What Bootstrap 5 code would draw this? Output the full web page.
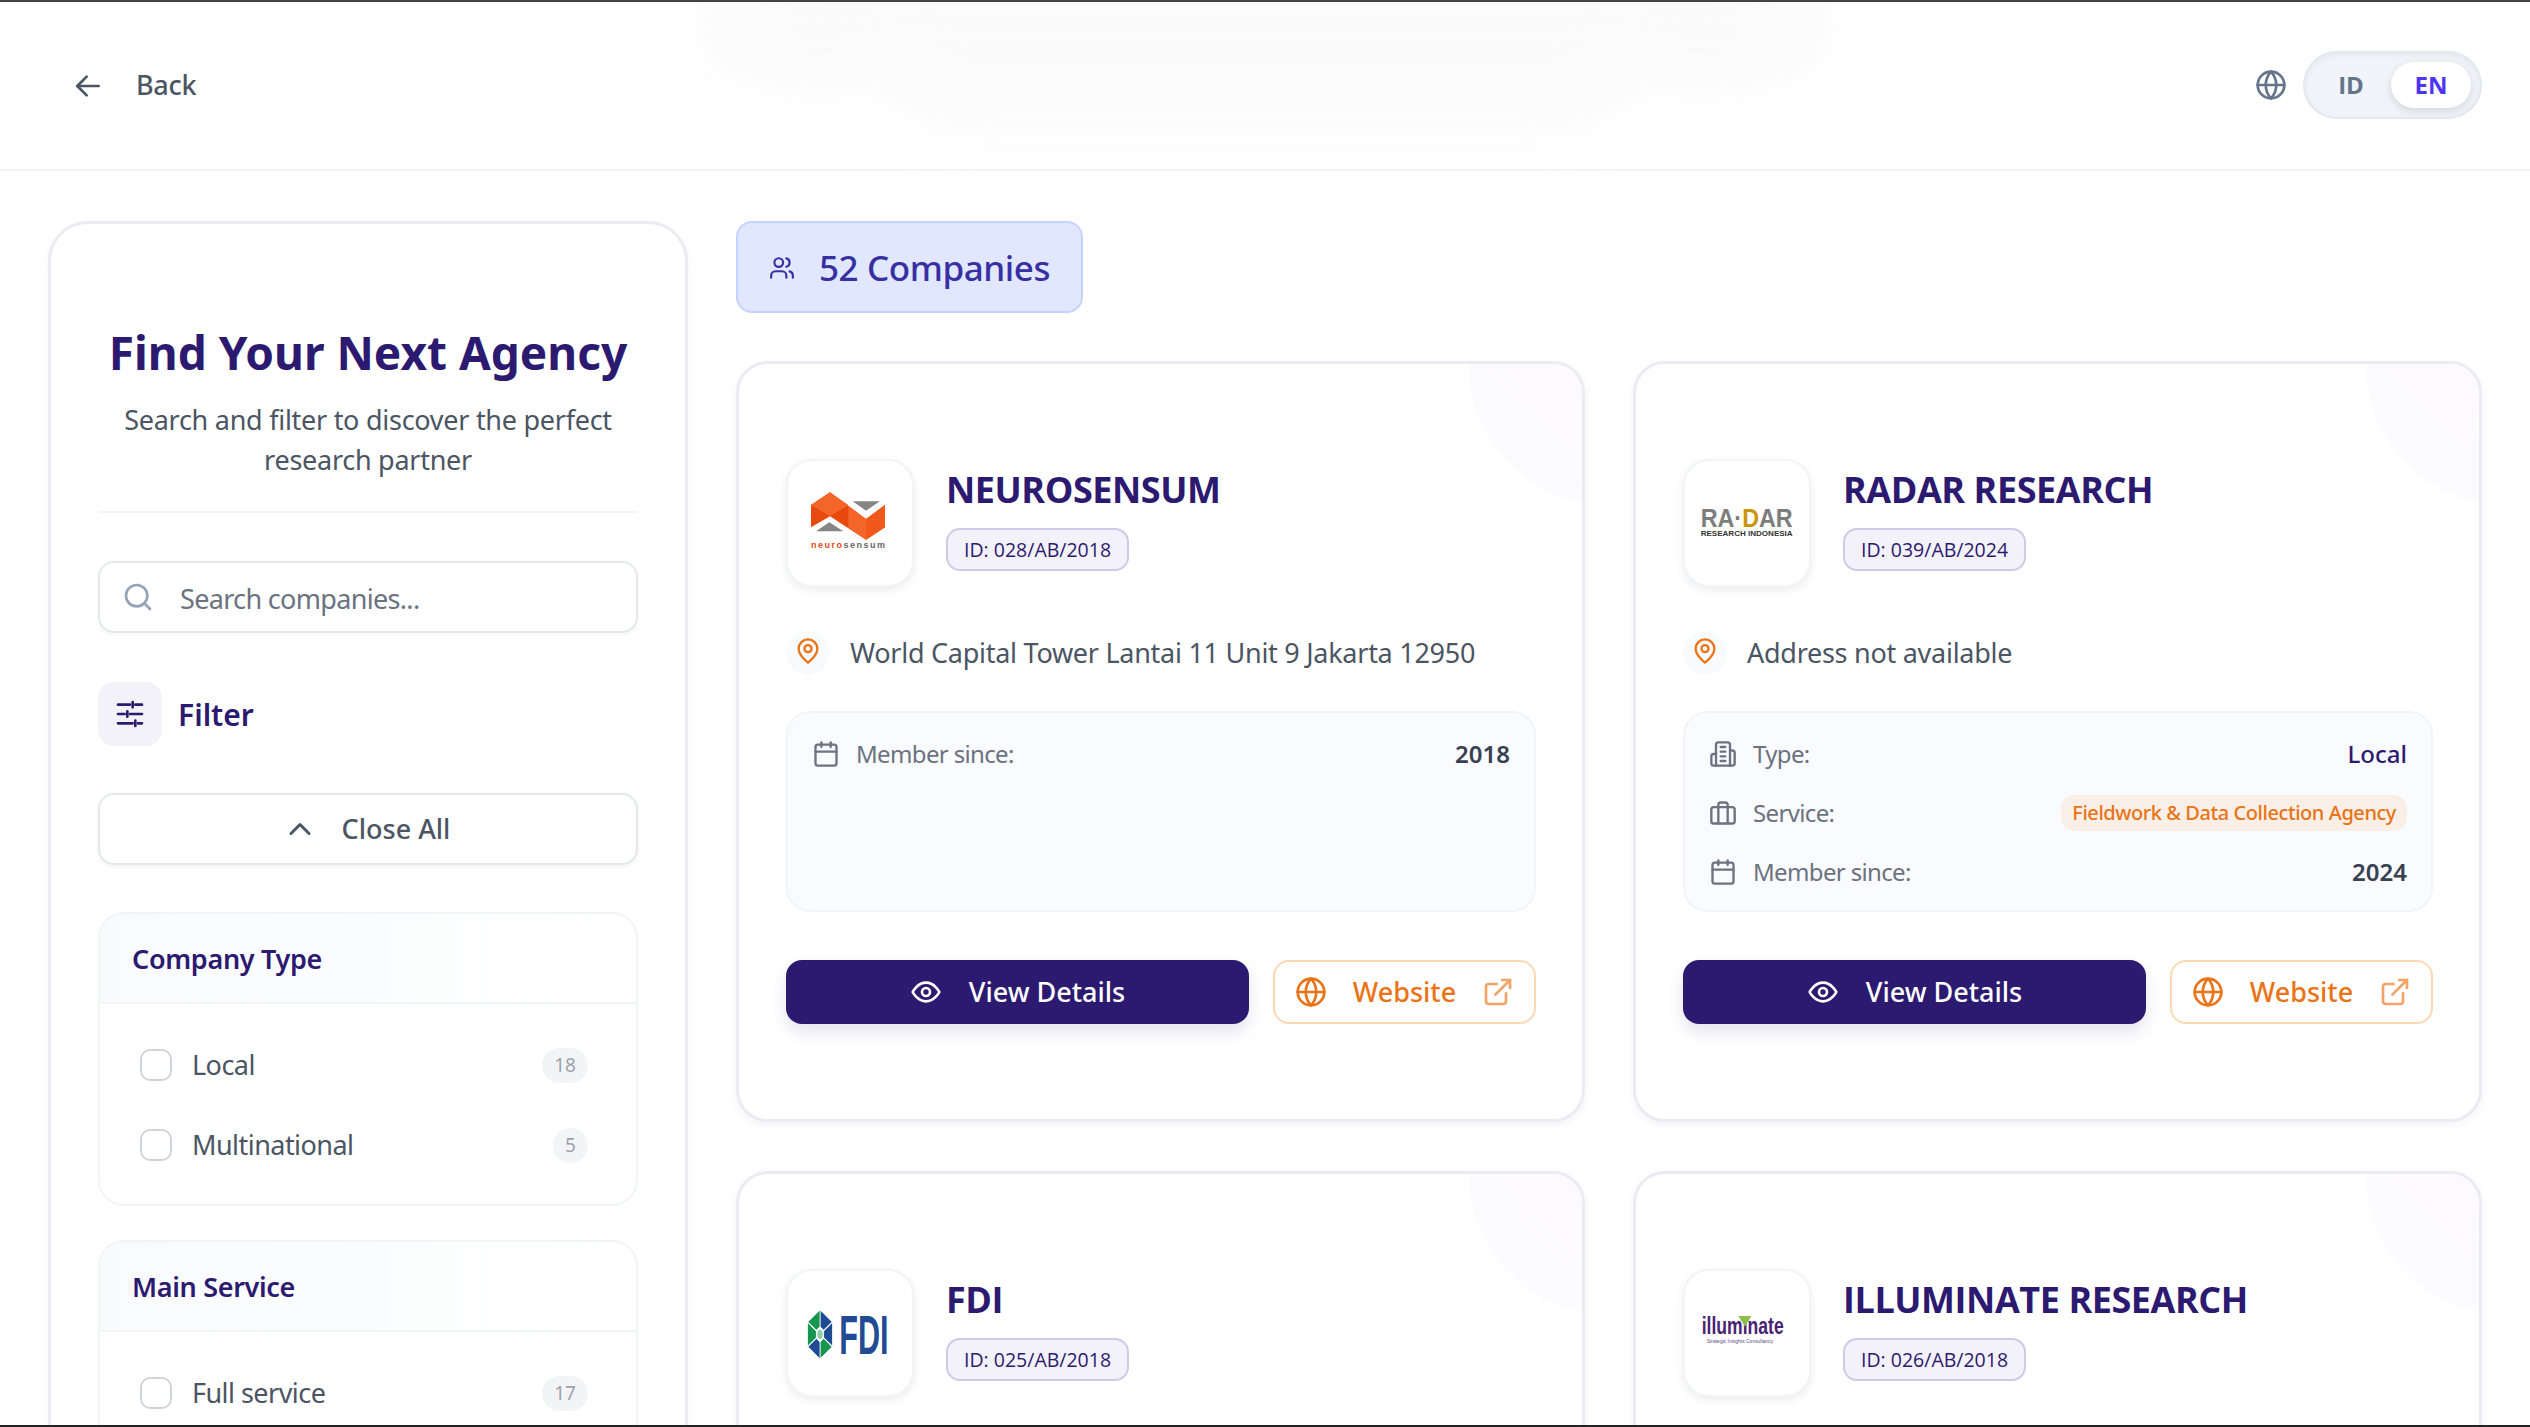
<!DOCTYPE html>
<html lang="en">
<head>
<meta charset="UTF-8" />
<title>Find Your Next Agency</title>
<link href="https://cdn.jsdelivr.net/npm/bootstrap@5.3.0/dist/css/bootstrap.min.css" rel="stylesheet" />
<style>
  html, body { height: 100%; overflow: hidden; }
  body {
    font-family: "Noto Sans", "Liberation Sans", sans-serif;
    background: #fff;
    color: #4b5563;
    border-top: 2px solid #444;
    border-bottom: 2px solid #222;
  }
  svg.ico { fill: none; stroke: currentColor; stroke-width: 2; stroke-linecap: round; stroke-linejoin: round; flex: none; display: block; }

  /* top bar */
  .top-bar { height: 169px; padding: 0 48px 0 72px; border-bottom: 2px solid #f3f4f6; overflow: hidden; }
  .top-smudge { position: absolute; left: 700px; top: -30px; width: 1130px; height: 110px; background: #fafafa; filter: blur(30px); border-radius: 60px; }
  .top-smudge::after { content: ""; position: absolute; left: 200px; top: 90px; width: 720px; height: 70px; background: #fbfbfb; border-radius: 40px; }
  .back-link { gap: 32px; font-size: 27px; font-weight: 500; color: #4b5563; text-decoration: none; position: relative; letter-spacing: -.012em; }
  .lang-wrap { gap: 16px; margin-bottom: 1px; color: #64748b; position: relative; }
  .lang-pill { width: 179px; height: 68px; padding: 9px 9px 9px 6px; background: #f1f5f9; border: 2px solid #e2e8f0; border-radius: 34px; box-shadow: inset 0 2px 6px rgba(15,23,42,.06); }
  .lang-opt { font-family: "Open Sans", "Liberation Sans", sans-serif; width: 80px; height: 46px; border-radius: 24px; font-size: 24px; font-weight: 700; line-height: 46px; text-align: center; color: #64748b; }
  .lang-opt.is-on { background: #fff; color: #4f35f3; box-shadow: 0 3px 8px rgba(15,23,42,.14); }

  /* layout */
  .content-area { padding: 50px 48px 0; gap: 48px; }
  .side-panel { width: 640px; flex: none; padding: 101px 47px 0; border: 3px solid #ecebf4; border-radius: 40px; background: #fff; box-shadow: 0 3px 8px rgba(45,27,110,.04); height: 1600px; }
  .main-col { min-width: 0; }

  /* sidebar */
  .side-title { font-size: 46px; font-weight: 700; color: #2c1a70; margin: 0 0 20px; line-height: 1.2; white-space: nowrap; text-align: center; }
  .side-sub { font-size: 27px; line-height: 40px; color: #4b5563; text-align: center; margin: 0; padding-bottom: 31px; border-bottom: 2px solid #f3f4f6; letter-spacing: -.01em; }
  .search-box { margin-top: 48px; }
  .search-box svg { position: absolute; left: 24px; top: 20px; color: #94a3b8; }
  .search-box .form-control { height: 72px; padding: 8px 12px 6px 80px; font-size: 27px; letter-spacing: -.025em; border: 2px solid #e5e7eb; border-radius: 16px; color: #4b5563; box-shadow: 0 2px 4px rgba(0,0,0,.04); }
  .search-box .form-control::placeholder { color: #6b7280; }
  .filter-head { margin-top: 49px; gap: 16px; font-size: 30px; font-weight: 600; color: #2c1a70; }
  .filter-ico { width: 64px; height: 64px; background: #f3f2f9; border-radius: 16px; }
  .close-btn { margin-top: 47px; width: 100%; height: 72px; gap: 24px; padding-right: 16px; font-size: 27px; font-weight: 500; color: #4b5563; background: #fff; border: 2px solid #e5e7eb; border-radius: 16px; box-shadow: 0 2px 4px rgba(0,0,0,.05); }
  .filter-group { margin-top: 47px; border: 2px solid #f3f4f6; border-radius: 26px; overflow: hidden; }
  .filter-group + .filter-group { margin-top: 34px; }
  .group-head { height: 90px; padding: 0 32px; font-size: 27px; font-weight: 600; letter-spacing: -.012em; color: #2c1a70; line-height: 90px; background: linear-gradient(90deg, #f9fafc, #fff); border-bottom: 2px solid #f3f4f6; }
  .group-body { padding: 21px 48px 19px 40px; }
  .check-row { height: 80px; gap: 20px; font-size: 27px; letter-spacing: -.02em; color: #4b5563; }
  input.check-box[type=checkbox] { width: 32px; height: 32px; margin: 0; border: 2px solid #d1d5db; border-radius: 10px; background: #fff; flex: none; }
  .count-pill { min-width: 35px; height: 35px; padding: 0 12px; margin-left: auto; border-radius: 18px; background: #f3f4f6; color: #9ca3af; font-size: 19px; line-height: 35px; text-align: center; letter-spacing: 0; }

  /* companies */
  .count-box { width: fit-content; height: 92px; padding: 2px 31px 0 31px; gap: 24px; background: #e0e7ff; border: 2px solid #c7d2fe; border-radius: 16px; color: #3730a3; font-size: 35px; font-weight: 500; letter-spacing: -.012em; }
  .company-row { --bs-gutter-x: 48px; --bs-gutter-y: 49px; margin-top: -1px; }
  .company-box { position: relative; overflow: hidden; height: 761px; padding: 95px 46px 0 47px; background: #fff; border: 3px solid #ecebf4; border-radius: 32px; box-shadow: 0 3px 8px rgba(45,27,110,.05); }
  .company-box::before { content: ""; position: absolute; left: 730px; top: -137px; width: 278px; height: 278px; border-radius: 50%; background: linear-gradient(225deg, #faf8fa, #fcfbfd); }
  .company-head { gap: 32px; position: relative; }
  .logo-box { width: 128px; height: 128px; border-radius: 26px; background: #fff; border: 2px solid #f3f4f6; box-shadow: 0 3px 8px rgba(0,0,0,.08); flex: none; overflow: hidden; }
  .logo-box svg { display: block; width: 128px; height: 128px; margin: -2px; }
  .company-name { font-family: "Open Sans", "Liberation Sans", sans-serif; font-size: 36px; font-weight: 700; color: #2c1a70; margin: 7px 0 14px; line-height: 48px; white-space: nowrap; letter-spacing: -.012em; }
  .id-tag { font-family: "Open Sans", "Liberation Sans", sans-serif; display: inline-block; height: 43px; padding: 0 16px; font-size: 19.5px; line-height: 39px; font-weight: 500; color: #2c1a70; background: #f3f1f9; border: 2px solid #cfcae6; border-radius: 14px; }
  .addr-row { margin-top: 44px; gap: 20px; font-size: 27px; letter-spacing: -.01em; color: #4b5563; height: 44px; }
  .pin-ico { width: 44px; height: 44px; border-radius: 50%; background: #f8fafc; color: #ea7317; }
  .pin-ico svg { margin-bottom: 5px; }
  .info-box { height: 201px; margin-top: 36px; padding: 11px 24px; background: #fafbfe; border: 2px solid #f3f4f6; border-radius: 24px; }
  .info-row { height: 59px; font-size: 24px; letter-spacing: -.027em; color: #6b7280; gap: 16px; }
  .info-val { margin-left: auto; font-weight: 600; color: #374151; letter-spacing: 0; }
  .info-val.is-type { font-weight: 500; color: #2c1a70; }
  .service-tag { margin-left: auto; height: 36px; padding: 0 11px; line-height: 36px; border-radius: 14px; background: #f9efe6; color: #ea7317; font-size: 20px; letter-spacing: -.022em; font-weight: 500; white-space: nowrap; }
  .action-row { margin-top: 48px; gap: 24px; }
  .view-btn { flex: 1; height: 64px; gap: 27px; font-size: 27px; font-weight: 500; color: #fff; background: #2c1a70; border: 0; border-radius: 16px; box-shadow: 0 8px 16px rgba(44,26,112,.12); }
  .view-btn:hover { color: #fff; background: #2c1a70; }
  .site-btn { width: 263px; height: 64px; padding: 0 20px 0 20px; font-size: 27px; font-weight: 500; color: #ea7317; background: #fff; border: 2px solid #fcd9b6; border-radius: 16px; justify-content: space-between; }
  .site-btn:hover { color: #ea7317; background: #fff; border-color: #fcd9b6; }
  .site-btn .ext { color: #f2a468; }
</style>
</head>
<body>
  <header class="top-bar d-flex justify-content-between align-items-center position-relative">
    <div class="top-smudge"></div>
    <a href="#" class="back-link d-flex align-items-center">
      <svg class="ico" width="32" height="32" viewBox="0 0 24 24"><path d="M20 12H4"/><path d="M11 19l-7-7 7-7"/></svg>
      Back
    </a>
    <div class="lang-wrap d-flex align-items-center">
      <svg class="ico" width="32" height="32" viewBox="0 0 24 24"><circle cx="12" cy="12" r="10"/><path d="M2 12h20"/><path d="M12 2a15.3 15.3 0 0 1 4 10 15.3 15.3 0 0 1-4 10 15.3 15.3 0 0 1-4-10 15.3 15.3 0 0 1 4-10z"/></svg>
      <div class="lang-pill d-flex">
        <span class="lang-opt">ID</span>
        <span class="lang-opt is-on">EN</span>
      </div>
    </div>
  </header>

  <div class="content-area d-flex align-items-start">
    <aside class="side-panel">
      <h1 class="side-title">Find Your Next Agency</h1>
      <p class="side-sub">Search and filter to discover the perfect research partner</p>

      <div class="search-box position-relative">
        <svg class="ico" width="32" height="32" viewBox="0 0 24 24"><circle cx="11" cy="11" r="8"/><path d="M21 21l-4.3-4.3"/></svg>
        <input type="text" class="form-control" placeholder="Search companies..." />
      </div>

      <div class="filter-head d-flex align-items-center">
        <div class="filter-ico d-flex align-items-center justify-content-center">
          <svg class="ico" width="32" height="32" viewBox="0 0 24 24"><path d="M3 5h9M16 5h5M3 12h5M12 12h9M3 19h11M18 19h3"/><path d="M14 3v4M10 10v4M16 17v4"/></svg>
        </div>
        Filter
      </div>

      <button class="btn close-btn d-flex align-items-center justify-content-center">
        <svg class="ico" width="36" height="36" viewBox="0 0 24 24"><path d="M18 15l-6-6-6 6"/></svg>
        Close All
      </button>

      <div class="filter-group">
        <div class="group-head">Company Type</div>
        <div class="group-body">
          <label class="check-row d-flex align-items-center"><input type="checkbox" class="check-box form-check-input" />Local<span class="count-pill">18</span></label>
          <label class="check-row d-flex align-items-center"><input type="checkbox" class="check-box form-check-input" />Multinational<span class="count-pill">5</span></label>
        </div>
      </div>

      <div class="filter-group">
        <div class="group-head">Main Service</div>
        <div class="group-body">
          <label class="check-row d-flex align-items-center"><input type="checkbox" class="check-box form-check-input" />Full service<span class="count-pill">17</span></label>
        </div>
      </div>
    </aside>

    <main class="main-col flex-grow-1">
      <div class="count-box d-flex align-items-center">
        <svg class="ico" width="26" height="26" viewBox="0 0 24 24"><path d="M16 21v-2a4 4 0 0 0-4-4H6a4 4 0 0 0-4 4v2"/><circle cx="9" cy="7" r="4"/><path d="M22 21v-2a4 4 0 0 0-3-3.87"/><path d="M16 3.13a4 4 0 0 1 0 7.75"/></svg>
        52 Companies
      </div>

      <div class="row row-cols-2 company-row">
        <div class="col">
          <div class="company-box">
            <div class="company-head d-flex">
              <div class="logo-box">
                <svg viewBox="18 0 384 384">
                  <polygon fill="#e8490f" points="93,138 150,100 258,180 315,138 315,205 258,242 150,172 93,205"/>
                  <polygon fill="#f4652a" points="150,100 205,138 150,172 93,138"/>
                  <polygon fill="#f4652a" points="205,140 258,180 258,242 205,205"/>
                  <polygon fill="#f0581c" points="258,180 315,138 315,205 258,242"/>
                  <polygon fill="#858585" points="218,127 300,127 258,155"/>
                  <polygon fill="#858585" points="108,217 190,217 148,190"/>
                  <text x="93" y="267" font-family="Liberation Sans, sans-serif" font-weight="700" font-size="27" textLength="222" lengthAdjust="spacing"><tspan fill="#e8490f">neuro</tspan><tspan fill="#666">sensum</tspan></text>
                </svg>
              </div>
              <div>
                <h2 class="company-name">NEUROSENSUM</h2>
                <span class="id-tag">ID: 028/AB/2018</span>
              </div>
            </div>
            <div class="addr-row d-flex align-items-center">
              <div class="pin-ico d-flex align-items-center justify-content-center">
                <svg class="ico" width="28" height="28" viewBox="0 0 24 24"><path d="M20 10c0 6-8 12-8 12s-8-6-8-12a8 8 0 0 1 16 0z"/><circle cx="12" cy="10" r="3"/></svg>
              </div>
              World Capital Tower Lantai 11 Unit 9 Jakarta 12950
            </div>
            <div class="info-box">
              <div class="info-row d-flex align-items-center">
                <svg class="ico" width="28" height="28" viewBox="0 0 24 24"><rect x="3" y="4" width="18" height="18" rx="2"/><path d="M16 2v4M8 2v4M3 10h18"/></svg>
                Member since:<span class="info-val">2018</span>
              </div>
            </div>
            <div class="action-row d-flex">
              <a href="#" class="btn view-btn d-flex align-items-center justify-content-center">
                <svg class="ico" width="32" height="32" viewBox="0 0 24 24"><path d="M2 12s3.5-7 10-7 10 7 10 7-3.5 7-10 7-10-7-10-7z"/><circle cx="12" cy="12" r="3"/></svg>
                View Details
              </a>
              <a href="#" class="btn site-btn d-flex align-items-center">
                <svg class="ico" width="32" height="32" viewBox="0 0 24 24"><circle cx="12" cy="12" r="10"/><path d="M2 12h20"/><path d="M12 2a15.3 15.3 0 0 1 4 10 15.3 15.3 0 0 1-4 10 15.3 15.3 0 0 1-4-10 15.3 15.3 0 0 1 4-10z"/></svg>
                Website
                <svg class="ico ext" width="32" height="32" viewBox="0 0 24 24"><path d="M18 13v6a2 2 0 0 1-2 2H5a2 2 0 0 1-2-2V8a2 2 0 0 1 2-2h6"/><path d="M15 3h6v6"/><path d="M10 14L21 3"/></svg>
              </a>
            </div>
          </div>
        </div>

        <div class="col">
          <div class="company-box">
            <div class="company-head d-flex">
              <div class="logo-box">
                <svg viewBox="9 0 384 384">
                  <text x="62" y="204" font-family="Liberation Sans, sans-serif" font-weight="700" font-size="78" fill="#7d7d7d" textLength="276" lengthAdjust="spacingAndGlyphs">RA·<tspan fill="#c8960c">D</tspan>AR</text>
                  <text x="62" y="232" font-family="Liberation Sans, sans-serif" font-weight="700" font-size="23" fill="#333" textLength="276" lengthAdjust="spacingAndGlyphs">RESEARCH INDONESIA</text>
                </svg>
              </div>
              <div>
                <h2 class="company-name">RADAR RESEARCH</h2>
                <span class="id-tag">ID: 039/AB/2024</span>
              </div>
            </div>
            <div class="addr-row d-flex align-items-center">
              <div class="pin-ico d-flex align-items-center justify-content-center">
                <svg class="ico" width="28" height="28" viewBox="0 0 24 24"><path d="M20 10c0 6-8 12-8 12s-8-6-8-12a8 8 0 0 1 16 0z"/><circle cx="12" cy="10" r="3"/></svg>
              </div>
              Address not available
            </div>
            <div class="info-box">
              <div class="info-row d-flex align-items-center">
                <svg class="ico" width="28" height="28" viewBox="0 0 24 24"><path d="M6 22V4a2 2 0 0 1 2-2h8a2 2 0 0 1 2 2v18z"/><path d="M6 12H4a2 2 0 0 0-2 2v6a2 2 0 0 0 2 2h2"/><path d="M18 9h2a2 2 0 0 1 2 2v9a2 2 0 0 1-2 2h-2"/><path d="M10 6h4M10 10h4M10 14h4M10 18h4"/></svg>
                Type:<span class="info-val is-type">Local</span>
              </div>
              <div class="info-row d-flex align-items-center">
                <svg class="ico" width="28" height="28" viewBox="0 0 24 24"><rect x="2" y="7" width="20" height="14" rx="2"/><path d="M16 21V5a2 2 0 0 0-2-2h-4a2 2 0 0 0-2 2v16"/></svg>
                Service:<span class="service-tag">Fieldwork &amp; Data Collection Agency</span>
              </div>
              <div class="info-row d-flex align-items-center">
                <svg class="ico" width="28" height="28" viewBox="0 0 24 24"><rect x="3" y="4" width="18" height="18" rx="2"/><path d="M16 2v4M8 2v4M3 10h18"/></svg>
                Member since:<span class="info-val">2024</span>
              </div>
            </div>
            <div class="action-row d-flex">
              <a href="#" class="btn view-btn d-flex align-items-center justify-content-center">
                <svg class="ico" width="32" height="32" viewBox="0 0 24 24"><path d="M2 12s3.5-7 10-7 10 7 10 7-3.5 7-10 7-10-7-10-7z"/><circle cx="12" cy="12" r="3"/></svg>
                View Details
              </a>
              <a href="#" class="btn site-btn d-flex align-items-center">
                <svg class="ico" width="32" height="32" viewBox="0 0 24 24"><circle cx="12" cy="12" r="10"/><path d="M2 12h20"/><path d="M12 2a15.3 15.3 0 0 1 4 10 15.3 15.3 0 0 1-4 10 15.3 15.3 0 0 1-4-10 15.3 15.3 0 0 1 4-10z"/></svg>
                Website
                <svg class="ico ext" width="32" height="32" viewBox="0 0 24 24"><path d="M18 13v6a2 2 0 0 1-2 2H5a2 2 0 0 1-2-2V8a2 2 0 0 1 2-2h6"/><path d="M15 3h6v6"/><path d="M10 14L21 3"/></svg>
              </a>
            </div>
          </div>
        </div>

        <div class="col">
          <div class="company-box">
            <div class="company-head d-flex">
              <div class="logo-box">
                <svg viewBox="18 9 384 384">
                  <g transform="translate(120 205) scale(.58 1)" stroke="#fff" stroke-width="4">
                    <polygon fill="#1f4a94" points="0,-22 0,-75 65,-37 19,-11"/>
                    <polygon fill="#1f4a94" points="0,-22 0,-75 65,-37 19,-11" transform="rotate(60)"/>
                    <polygon fill="#17964f" points="0,-22 0,-75 65,-37 19,-11" transform="rotate(120)"/>
                    <polygon fill="#1f4a94" points="0,-22 0,-75 65,-37 19,-11" transform="rotate(180)"/>
                    <polygon fill="#17964f" points="0,-22 0,-75 65,-37 19,-11" transform="rotate(240)"/>
                    <polygon fill="#17964f" points="0,-22 0,-75 65,-37 19,-11" transform="rotate(300)"/>
                    <circle r="14" fill="#8fcfa8" stroke="none"/>
                  </g>
                  <text transform="translate(178 263) scale(.556 1)" font-family="Liberation Sans, sans-serif" font-weight="700" font-size="165" fill="#234a94">FDI</text>
                </svg>
              </div>
              <div>
                <h2 class="company-name">FDI</h2>
                <span class="id-tag">ID: 025/AB/2018</span>
              </div>
            </div>
          </div>
        </div>

        <div class="col">
          <div class="company-box">
            <div class="company-head d-flex">
              <div class="logo-box">
                <svg viewBox="9 9 384 384">
                  <text x="65" y="205" font-family="Liberation Sans, sans-serif" font-weight="700" font-size="70" fill="#4a2272" textLength="246" lengthAdjust="spacingAndGlyphs">illuminate</text>
                  <polygon fill="#8cc04a" points="175,150 214,150 195,182"/>
                  <text x="80" y="230" font-family="Liberation Sans, sans-serif" font-size="15" fill="#5d4a80" textLength="200" lengthAdjust="spacingAndGlyphs">Strategic Insights Consultancy</text>
                </svg>
              </div>
              <div>
                <h2 class="company-name">ILLUMINATE RESEARCH</h2>
                <span class="id-tag">ID: 026/AB/2018</span>
              </div>
            </div>
          </div>
        </div>
      </div>
    </main>
  </div>

  <script src="https://cdn.jsdelivr.net/npm/bootstrap@5.3.0/dist/js/bootstrap.bundle.min.js"></script>
</body>
</html>
